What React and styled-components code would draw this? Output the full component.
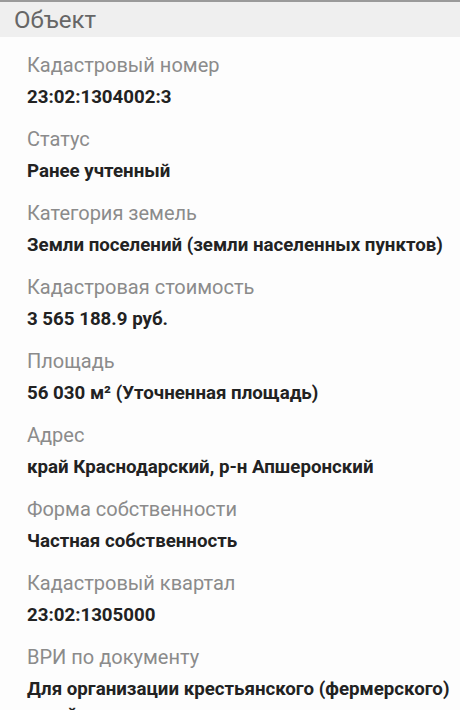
import React from "react";
import styled, { createGlobalStyle } from "styled-components";

const Global = createGlobalStyle`
  html, body { margin: 0; padding: 0; background: #fdfdfd; }
  body { font-family: Roboto, "Noto Sans", Arial, sans-serif; }
`;

const Page = styled.div`
  width: 460px;
  min-height: 710px;
  background: #fdfdfd;
  border-top: 2px solid #9a9a9a;
  box-sizing: border-box;
  overflow: hidden;
`;

const Header = styled.div`
  height: 35px;
  background: #efefef;
  padding-left: 14px;
  display: flex;
  align-items: center;
  font-size: 24px;
  color: #666;
  font-weight: 400;
`;

const List = styled.div`
  display: flex;
  flex-direction: column;
  padding: 16px 2px 0 27px;
`;

const Row = styled.div`
  display: flex;
  flex-direction: column;
  gap: 7px;
  margin-bottom: 17px;
`;

const Label = styled.div`
  font-size: 20px;
  line-height: 24px;
  color: #8b8b8b;
`;

const Value = styled.div`
  font-size: 18.7px;
  line-height: 26px;
  font-weight: 700;
  color: #222;
`;

const items = [
  ["Кадастровый номер", "23:02:1304002:3"],
  ["Статус", "Ранее учтенный"],
  ["Категория земель", "Земли поселений (земли населенных пунктов)"],
  ["Кадастровая стоимость", "3 565 188.9 руб."],
  ["Площадь", "56 030 м² (Уточненная площадь)"],
  ["Адрес", "край Краснодарский, р-н Апшеронский"],
  ["Форма собственности", "Частная собственность"],
  ["Кадастровый квартал", "23:02:1305000"],
  ["ВРИ по документу", "Для организации крестьянского (фермерского) хозяйства"],
];

export default function App() {
  return (
    <Page>
      <Global />
      <Header>Объект</Header>
      <List>
        {items.map(([l, v]) => (
          <Row key={l}>
            <Label>{l}</Label>
            <Value>{v}</Value>
          </Row>
        ))}
      </List>
    </Page>
  );
}
